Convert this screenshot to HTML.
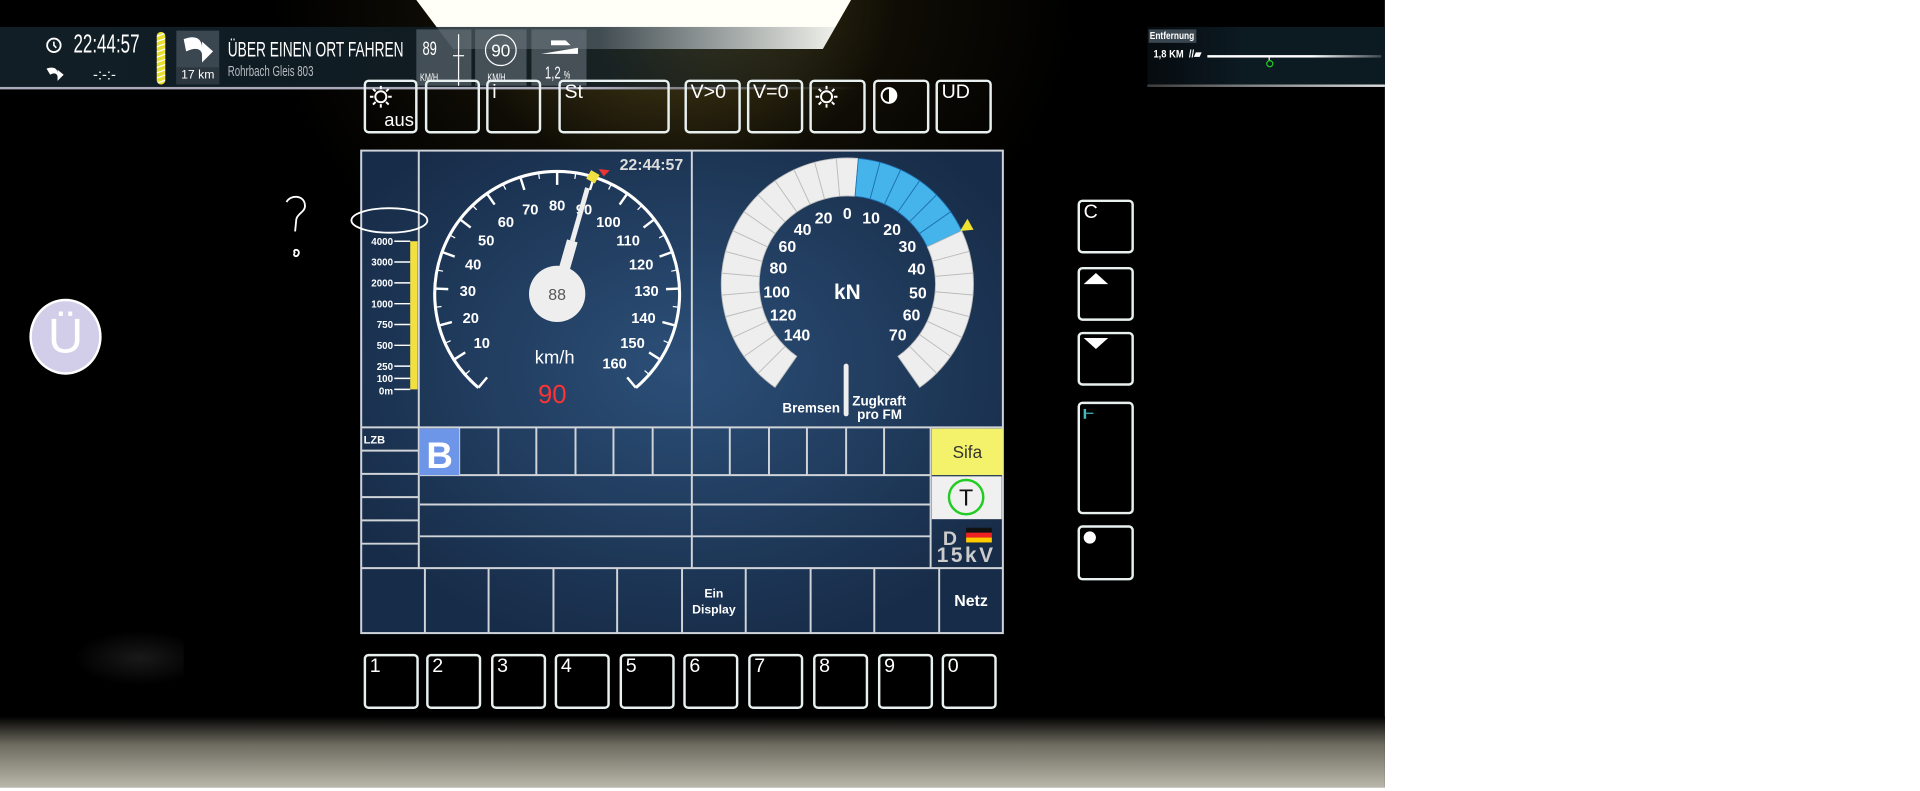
<!DOCTYPE html>
<html><head><meta charset="utf-8"><style>
html,body{margin:0;padding:0;background:#fff;width:1920px;height:791px;overflow:hidden}
#s{position:absolute;left:0;top:0;width:1568px;height:646px;transform:scale(1.22449);transform-origin:0 0;font-family:"Liberation Sans",sans-serif}
.a{position:absolute}
.btn{position:absolute;border:2px solid #e8f0f0;border-radius:4px;box-sizing:border-box;color:#fff;font-size:16px;line-height:16px;padding:1px 3px}
.cn{display:inline-block;transform:scaleX(.66);transform-origin:0 0;white-space:nowrap}
</style></head><body><div id="s">
<div class="a" style="left:0;top:0;width:1131px;height:643px;background:#000"></div>
<div class="a" style="left:200px;top:0;width:700px;height:600px;background:radial-gradient(ellipse 330px 260px at 50% 0%,rgba(150,130,50,.55),rgba(60,50,20,.25) 55%,rgba(0,0,0,0) 100%)"></div>
<svg class="a" style="left:0;top:0" width="1131" height="60"><polygon points="340,0 695,0 672,40 370,40" fill="#fffff8"/></svg>
<div class="a" style="left:0;top:585px;width:1131px;height:58px;background:linear-gradient(#000,#6e6c60 40%,#b9b7aa)"></div>
<div class="a" style="left:60px;top:515px;width:90px;height:45px;background:radial-gradient(ellipse at 60% 50%,rgba(50,50,50,.5),rgba(0,0,0,0) 70%)"></div>
<!-- top bar -->
<div class="a" style="left:0;top:22px;width:700px;height:50px;background:linear-gradient(90deg,rgba(18,32,40,.95),rgba(18,32,40,.8) 70%,rgba(18,32,40,0))"></div>
<div class="a" style="left:0;top:71px;width:700px;height:2px;background:linear-gradient(90deg,#aab,#aab 70%,rgba(170,170,180,0))"></div>
<svg class="a" style="left:36px;top:29px" width="16" height="16"><circle cx="8" cy="8" r="5.5" fill="none" stroke="#fff" stroke-width="1.5"/><path d="M8 5v3l2 2" stroke="#fff" stroke-width="1.3" fill="none"/></svg>
<div class="a" style="left:60px;top:25px;color:#fff;font-size:21px"><span class="cn">22:44:57</span></div>
<svg class="a" style="left:37px;top:53px" width="16" height="14"><path d="M1 3c6-2 9 0 9 4V4l5 4-5 5V10c0-3-3-4-6-2z" fill="#fff"/></svg>
<div class="a" style="left:76px;top:54px;color:#fff;font-size:12px">-:-:-</div>
<div class="a" style="left:128px;top:26px;width:7px;height:43px;border-radius:4px;background:repeating-linear-gradient(160deg,#e8df30 0 3px,#fff 3px 4px)"></div>
<div class="a" style="left:144px;top:25px;width:35px;height:44px;background:#3a4650"></div>
<svg class="a" style="left:148px;top:27px" width="28" height="26"><path d="M2 5c10-4 15 0 15 7V7l9 8-9 9v-6c0-5-5-7-13-3z" fill="#fff"/></svg>
<div class="a" style="left:144px;top:55px;width:35px;height:14px;background:#2c363e;color:#fff;font-size:10px;text-align:center;line-height:14px">17 km</div>
<div class="a" style="left:186px;top:31px;color:#fff;font-size:17px"><span class="cn">ÜBER EINEN ORT FAHREN</span></div>
<div class="a" style="left:186px;top:51px;color:#b7bcc2;font-size:12px"><span class="cn">Rohrbach Gleis 803</span></div>
<div class="a" style="left:340px;top:24px;width:45px;height:46px;background:rgba(110,120,130,.55)"></div>
<div class="a" style="left:388px;top:24px;width:42px;height:46px;background:rgba(110,120,130,.55)"></div>
<div class="a" style="left:434px;top:24px;width:45px;height:46px;background:rgba(110,120,130,.55)"></div>
<div class="a" style="left:345px;top:32px;color:#fff;font-size:16px"><span class="cn">89</span></div>
<div class="a" style="left:374px;top:28px;width:1px;height:42px;background:#fff"></div><div class="a" style="left:370px;top:45px;width:9px;height:1px;background:#fff"></div>
<div class="a" style="left:343px;top:58px;color:#fff;font-size:9px"><span class="cn">KM/H</span></div>
<div class="a" style="left:396px;top:28px;width:24px;height:24px;border:1.5px solid #fff;border-radius:50%;color:#fff;font-size:14px;text-align:center;line-height:24px">90</div>
<div class="a" style="left:398px;top:58px;color:#fff;font-size:9px"><span class="cn">KM/H</span></div>
<svg class="a" style="left:440px;top:30px" width="34" height="16"><path d="M10 3h12l4 4H10z" fill="#fff"/><path d="M2 14L32 9v5z" fill="#fff"/></svg>
<div class="a" style="left:445px;top:51px;color:#fff;font-size:14px"><span class="cn">1,2 <small style="font-size:9px">%</small></span></div>
<!-- right top -->
<div class="a" style="left:937px;top:22px;width:194px;height:47px;background:linear-gradient(90deg,rgba(10,18,24,.6),#0c1a22 40%)"></div>
<div class="a" style="left:937px;top:69px;width:194px;height:2px;background:linear-gradient(90deg,rgba(200,200,200,.3),#ddd)"></div>
<div class="a" style="left:938px;top:24px;width:38px;height:11px;background:#3a4650;color:#fff;font-size:8px;font-weight:bold;line-height:11px;padding-left:1px"><span class="cn" style="transform:scaleX(.85)">Entfernung</span></div>
<div class="a" style="left:942px;top:39px;color:#fff;font-size:9px;font-weight:bold"><span class="cn" style="transform:scaleX(.85)">1,8 KM &nbsp;//▰</span></div>
<div class="a" style="left:986px;top:45px;width:142px;height:2px;background:linear-gradient(90deg,#fff 60%,rgba(255,255,255,.2))"></div>
<div class="a" style="left:1036px;top:46px;width:1px;height:4px;background:#fff"></div>
<div class="a" style="left:1034px;top:49px;width:4px;height:4px;border:1.5px solid #2c2;border-radius:50%"></div>
<!-- top buttons -->
<div class="btn" style="left:297px;top:65px;width:44px;height:44px"><svg width="18" height="18" style="position:absolute;left:3px;top:3px"><circle cx="9" cy="9" r="4.5" fill="none" stroke="#fff" stroke-width="1.6"/><path d="M9 0v3M9 15v3M0 9h3M15 9h3M2.6 2.6l2.1 2.1M13.3 13.3l2.1 2.1M2.6 15.4l2.1-2.1M13.3 4.7l2.1-2.1" stroke="#fff" stroke-width="1.6"/></svg><span style="position:absolute;right:1px;bottom:0;font-size:15px">aus</span></div>
<div class="btn" style="left:347px;top:65px;width:45px;height:44px"></div>
<div class="btn" style="left:397px;top:65px;width:45px;height:44px">i</div>
<div class="btn" style="left:456px;top:65px;width:91px;height:44px">St</div>
<div class="btn" style="left:559px;top:65px;width:46px;height:44px">V&gt;0</div>
<div class="btn" style="left:610px;top:65px;width:46px;height:44px">V=0</div>
<div class="btn" style="left:661px;top:65px;width:46px;height:44px"><svg width="18" height="18" style="position:absolute;left:3px;top:3px"><circle cx="9" cy="9" r="4.5" fill="none" stroke="#fff" stroke-width="1.6"/><path d="M9 0v3M9 15v3M0 9h3M15 9h3M2.6 2.6l2.1 2.1M13.3 13.3l2.1 2.1M2.6 15.4l2.1-2.1M13.3 4.7l2.1-2.1" stroke="#fff" stroke-width="1.6"/></svg></div>
<div class="btn" style="left:713px;top:65px;width:46px;height:44px"><svg width="16" height="16" style="position:absolute;left:3px;top:3px"><circle cx="8" cy="8" r="6" fill="none" stroke="#fff" stroke-width="1.6"/><path d="M8 2a6 6 0 0 1 0 12z" fill="#fff"/></svg></div>
<div class="btn" style="left:764px;top:65px;width:46px;height:44px">UD</div>
<!-- panel -->
<svg class="a" style="left:294px;top:122px" width="527" height="397" viewBox="294 122 527 397" font-family="Liberation Sans, sans-serif">
<defs><radialGradient id="g" cx="0.5" cy="0.45" r="0.6"><stop offset="0" stop-color="#2c4f78"/><stop offset="1" stop-color="#172c48"/></radialGradient></defs>
<rect x="294" y="122" width="526" height="396" fill="url(#g)"/>
<g stroke="#d0d4d8" stroke-width="1.6" fill="none">
<rect x="295" y="123" width="524" height="394"/>
<path d="M342 123V464M565 123V349M295 349H819M343 388H760M343 412H760M343 438H760M295 464H819M565 349V464M760 349V464"/>
<path d="M295 368H342M295 387H342M295 406H342M295 425H342M295 444H342"/>
<path d="M375 349V388M407 349V388M438 349V388M470 349V388M501 349V388M533 349V388M596 349V388M628 349V388M659 349V388M691 349V388M722 349V388"/>
<path d="M347 464V517M399 464V517M452 464V517M504 464V517M557 464V517M609 464V517M662 464V517M714 464V517M767 464V517"/>
</g>
<rect x="343" y="350" width="32" height="38" fill="#6d95e8"/>
<text x="359" y="382" font-size="30" font-weight="bold" fill="#fff" text-anchor="middle">B</text>
<rect x="761" y="350" width="58" height="38" fill="#f4f26a"/>
<text x="790" y="374" font-size="14" fill="#333" text-anchor="middle">Sifa</text>
<rect x="761" y="389" width="57" height="35" fill="#f0f0f0"/>
<circle cx="789" cy="406" r="14" fill="none" stroke="#2c2" stroke-width="2"/>
<text x="789" y="413" font-size="19" fill="#111" text-anchor="middle">T</text>
<text x="770" y="445" font-size="16" font-weight="bold" fill="#ccc">D</text>
<rect x="789" y="431" width="21" height="4" fill="#111"/><rect x="789" y="435" width="21" height="4" fill="#e22"/><rect x="789" y="439" width="21" height="4" fill="#fc0"/>
<text x="765" y="459" font-size="17" font-weight="bold" fill="#ccc" textLength="46">15kV</text>
<text x="297" y="362" font-size="9" font-weight="bold" fill="#fff">LZB</text>
<text x="583" y="488" font-size="10" font-weight="bold" fill="#fff" text-anchor="middle">Ein</text>
<text x="583" y="501" font-size="10" font-weight="bold" fill="#fff" text-anchor="middle">Display</text>
<text x="793" y="495" font-size="13" font-weight="bold" fill="#fff" text-anchor="middle">Netz</text>
<rect x="335" y="197" width="6" height="121" fill="#f2e040"/>
<g font-size="8" font-weight="bold" fill="#fff" text-anchor="end">
<text x="321" y="200">4000</text><text x="321" y="217">3000</text><text x="321" y="234">2000</text><text x="321" y="251">1000</text><text x="321" y="268">750</text><text x="321" y="285">500</text><text x="321" y="302">250</text><text x="321" y="312">100</text><text x="321" y="322">0m</text></g>
<path d="M322 197H335M322 214H335M322 231H335M322 248H335M322 265H335M322 282H335M322 299H335M322 309H335M322 318H335" stroke="#fff" stroke-width="1.2"/>
<text x="558" y="139" font-size="13" font-weight="bold" fill="#ddd" text-anchor="end">22:44:57</text>
<g id="spd"></g><g id="kn"></g>
<text x="453" y="297" font-size="15" fill="#fff" text-anchor="middle">km/h</text>
<text x="451" y="329" font-size="21" fill="#f33" text-anchor="middle">90</text>
<text x="692" y="244" font-size="17" font-weight="bold" fill="#fff" text-anchor="middle">kN</text>
<rect x="689" y="297" width="4" height="43" rx="2" fill="#eee"/>
<text x="686" y="337" font-size="11" font-weight="bold" fill="#fff" text-anchor="end">Bremsen</text>
<text x="696" y="331" font-size="11" font-weight="bold" fill="#fff">Zugkraft</text>
<text x="700" y="342" font-size="11" font-weight="bold" fill="#fff">pro FM</text>
</svg>
<div class="btn" style="left:297px;top:534px;width:45px;height:45px">1</div>
<div class="btn" style="left:348px;top:534px;width:45px;height:45px">2</div>
<div class="btn" style="left:401px;top:534px;width:45px;height:45px">3</div>
<div class="btn" style="left:453px;top:534px;width:45px;height:45px">4</div>
<div class="btn" style="left:506px;top:534px;width:45px;height:45px">5</div>
<div class="btn" style="left:558px;top:534px;width:45px;height:45px">6</div>
<div class="btn" style="left:611px;top:534px;width:45px;height:45px">7</div>
<div class="btn" style="left:664px;top:534px;width:45px;height:45px">8</div>
<div class="btn" style="left:717px;top:534px;width:45px;height:45px">9</div>
<div class="btn" style="left:769px;top:534px;width:45px;height:45px">0</div>
<div class="btn" style="left:880px;top:163px;width:46px;height:44px">C</div>
<div class="btn" style="left:880px;top:218px;width:46px;height:44px"><div style="width:0;height:0;border-left:10px solid transparent;border-right:10px solid transparent;border-bottom:9px solid #fff;margin-top:2px"></div></div>
<div class="btn" style="left:880px;top:271px;width:46px;height:44px"><div style="width:0;height:0;border-left:10px solid transparent;border-right:10px solid transparent;border-top:9px solid #fff;margin-top:2px"></div></div>
<div class="btn" style="left:880px;top:328px;width:46px;height:92px"><div style="width:2px;height:8px;background:#4bb;margin-top:3px"></div><div style="width:6px;height:1px;background:#4bb;margin-top:-5px;margin-left:2px"></div></div>
<div class="btn" style="left:880px;top:429px;width:46px;height:45px"><div style="width:10px;height:10px;border-radius:50%;background:#fff;margin-top:2px"></div></div>
<svg class="a" style="left:225px;top:155px" width="130" height="65"><path d="M9 10c3-6 14-6 15 2 1 6-6 7-7 12l-1 10" stroke="#fff" stroke-width="1.5" fill="none"/><path d="M16 52c-3-4 4-4 3 0-1 3-4 3-4 0" stroke="#fff" stroke-width="1.5" fill="none"/><ellipse cx="93" cy="25" rx="31" ry="10" stroke="#fff" stroke-width="1.5" fill="none"/></svg>
<div class="a" style="left:24px;top:244px;width:55px;height:58px;border-radius:50%;background:#d2cde8;border:2px solid #fff;color:#fff;font-size:40px;text-align:center;line-height:58px">Ü</div>
</div>
<script>
var NS="http://www.w3.org/2000/svg";
function el(p,t,a,txt){var e=document.createElementNS(NS,t);for(var k in a)e.setAttribute(k,a[k]);if(txt)e.textContent=txt;p.appendChild(e);return e}
var s=document.getElementById('spd'),cx=455,cy=240,R=100;
function pt(a,r){var t=a*Math.PI/180;return [cx+r*Math.sin(t),cy-r*Math.cos(t)]}
var p0=pt(-140,R),p1=pt(140,R);
el(s,'path',{d:'M'+p0+'A'+R+' '+R+' 0 1 1 '+p1,fill:'none',stroke:'#fff','stroke-width':2.5});
for(var v=0;v<=160;v+=5){var a=(v-80)*1.75,L=v%10==0?11:5,A=pt(a,R),B=pt(a,R-L);el(s,'line',{x1:A[0],y1:A[1],x2:B[0],y2:B[1],stroke:'#fff','stroke-width':v%10==0?2:1});
 if(v%10==0&&v>0){var T=pt(a,R-27);el(s,'text',{x:T[0],y:T[1]+5,'font-size':12,'font-weight':'bold',fill:'#fff','text-anchor':'middle'},''+v)}}
var n1=pt(16,90),n2=pt(16,45),n3=pt(16,22);el(s,'line',{x1:n1[0],y1:n1[1],x2:n2[0],y2:n2[1],stroke:'#eee','stroke-width':4});el(s,'line',{x1:n2[0],y1:n2[1],x2:n3[0],y2:n3[1],stroke:'#eee','stroke-width':9});
el(s,'circle',{cx:cx,cy:cy,r:23,fill:'#eee'});el(s,'text',{x:cx,y:cy+5,'font-size':13,fill:'#555','text-anchor':'middle'},'88');
var y1=pt(17,100);el(s,'rect',{x:y1[0]-4,y:y1[1]-4,width:8,height:8,fill:'#f0e040',transform:'rotate(30 '+y1[0]+' '+y1[1]+')'});
var r1=pt(21,106);el(s,'path',{d:'M'+(r1[0]-4)+' '+(r1[1]-3)+'l9 1-5 5z',fill:'#e33'});
var k=document.getElementById('kn');cx=692;cy=232;
function seg(a0,a1,fill){var o=103,i=72,A=pt(a0,o),B=pt(a1,o),C=pt(a1,i),D=pt(a0,i);el(k,'path',{d:'M'+A+'A'+o+' '+o+' 0 0 1 '+B+'L'+C+'A'+i+' '+i+' 0 0 0 '+D+'Z',fill:fill,stroke:fill=='#eee'?'#bbb':'#1f6fb0','stroke-width':.7})}
var st=290/29;for(var j=0;j<29;j++){var a0=-145+j*st;seg(a0,a0+st,(a0>=-0.1&&a0<60)?'#44b4ea':'#eee')}
var la=[[0,0],[20,-21],[40,-42],[60,-62],[80,-82],[100,-103],[120,-124],[140,-145]],ra=[[10,21],[20,42],[30,62],[40,83],[50,104],[60,124],[70,145]];
la.concat(ra).forEach(function(q){var P=pt(q[1]*0.93,58);el(k,'text',{x:P[0],y:P[1]+5,'font-size':13,'font-weight':'bold',fill:'#fff','text-anchor':'middle'},''+q[0])});
var tr=pt(64,108);el(k,'path',{d:'M'+(tr[0]-5)+' '+(tr[1]+4)+'l6-10 5 9z',fill:'#f0e030'});
</script>
</body></html>
